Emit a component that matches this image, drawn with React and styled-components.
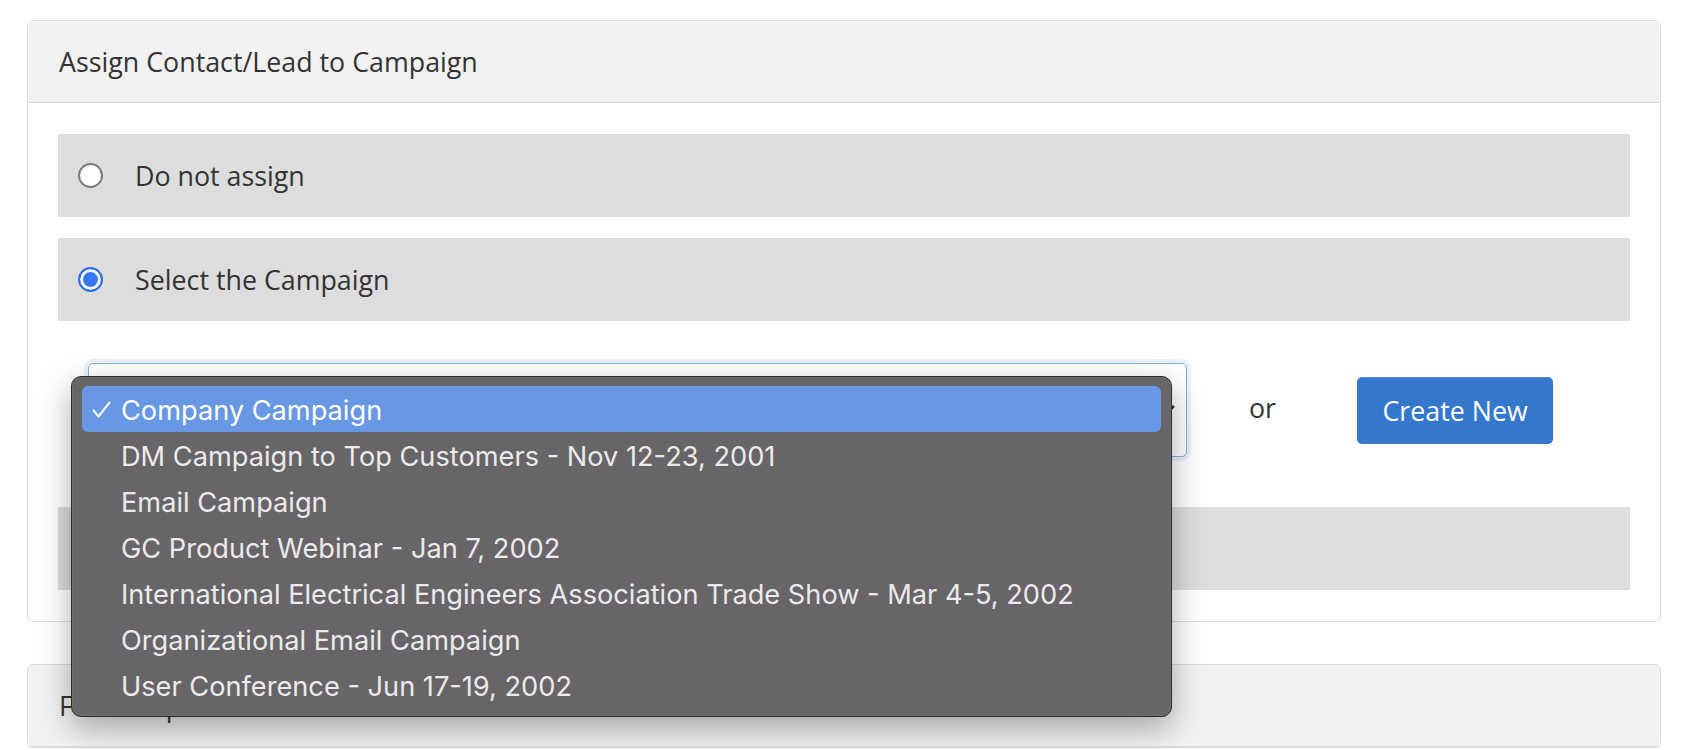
import React from 'react';
import styled, { createGlobalStyle } from 'styled-components';

const GlobalStyle = createGlobalStyle`
  html, body {
    margin: 0;
    padding: 0;
    background: #ffffff;
    font-family: "Open Sans", "Noto Sans", sans-serif;
    color: #333333;
    overflow: hidden;
  }
`;

const Page = styled.main`
  padding: 20px 25px 0 27px;
`;

const Panel = styled.section`
  border: 1px solid #dcdcdc;
  border-radius: 6px;
  margin-bottom: 42px;
  background: #ffffff;
`;

const PanelHeader = styled.header`
  display: flex;
  align-items: center;
  height: 81px;
  padding: 0 31px;
  background: #f2f2f2;
  border-bottom: 1px solid #dcdcdc;
  border-radius: 6px 6px 0 0;
  font-size: 26.8px;
  color: #333333;
`;

const PanelBody = styled.div`
  display: flex;
  flex-direction: column;
  padding: 31px 30px 31px 30px;
`;

const OptionRow = styled.label`
  display: flex;
  align-items: center;
  gap: 32px;
  height: 83px;
  padding-left: 20px;
  margin-bottom: ${(p) => (p.$last ? '0' : '21px')};
  background: #dddddd;
  font-size: 26.8px;
  color: #333333;
`;

const Radio = styled.span`
  box-sizing: border-box;
  flex: none;
  width: 25px;
  height: 25px;
  border-radius: 50%;
  background: ${(p) => (p.$checked ? '#3478f6' : '#ffffff')};
  border: ${(p) => (p.$checked ? '2px solid #2f6fe6' : '2px solid #7a7a7a')};
  box-shadow: ${(p) => (p.$checked ? 'inset 0 0 0 3px #ffffff' : 'none')};
`;

const SelectRow = styled.div`
  display: flex;
  align-items: center;
  padding: 42px 0 50px 30px;
`;

const SelectWrap = styled.div`
  position: relative;
  flex: none;
  width: 1099px;
  height: 94px;
`;

const SelectBox = styled.div`
  box-sizing: border-box;
  height: 100%;
  border: 1px solid #7fb0e8;
  border-radius: 5px;
  background: #ffffff;
  box-shadow: 0 0 0 4px rgba(120, 170, 230, 0.16);
  display: flex;
  align-items: center;
  justify-content: flex-end;
  padding-right: 9px;
`;

const Or = styled.span`
  margin-left: 62px;
  font-size: 26.8px;
  color: #333333;
  padding-bottom: 6px;
`;

const Button = styled.button`
  margin-left: 81px;
  width: 196px;
  height: 67px;
  border: none;
  border-radius: 5px;
  background: #3477cd;
  color: #ffffff;
  font-family: "Open Sans", "Noto Sans", sans-serif;
  font-size: 26.8px;
  box-shadow: inset 0 1px 0 rgba(255, 255, 255, 0.15);
  cursor: pointer;
`;

const Menu = styled.ul`
  position: absolute;
  left: -17px;
  top: 13px;
  box-sizing: border-box;
  width: 1101px;
  height: 341px;
  margin: 0;
  padding: 9px 10px 8px 10px;
  list-style: none;
  background: #676567;
  border: 1px solid #2c2c2c;
  border-radius: 10px;
  box-shadow: 0 12px 32px rgba(0, 0, 0, 0.32), inset 0 0 0 1px rgba(255, 255, 255, 0.08);
  font-family: Inter, "Liberation Sans", sans-serif;
  z-index: 5;
`;

const MenuItem = styled.li`
  position: relative;
  display: flex;
  align-items: center;
  height: 46px;
  padding-left: 39px;
  padding-top: 2px;
  box-sizing: border-box;
  border-radius: 6px;
  background: ${(p) => (p.$selected ? '#6897e3' : 'transparent')};
  color: ${(p) => (p.$selected ? '#ffffff' : '#ebebeb')};
  font-size: 27.2px;
  white-space: nowrap;
`;

const Check = styled.svg`
  position: absolute;
  left: 10px;
  top: 15px;
`;

const campaigns = [
  'Company Campaign',
  'DM Campaign to Top Customers - Nov 12-23, 2001',
  'Email Campaign',
  'GC Product Webinar - Jan 7, 2002',
  'International Electrical Engineers Association Trade Show - Mar 4-5, 2002',
  'Organizational Email Campaign',
  'User Conference - Jun 17-19, 2002',
];

const App = () => {
  return (
    <Page>
      <GlobalStyle />
      <Panel>
        <PanelHeader>Assign Contact/Lead to Campaign</PanelHeader>
        <PanelBody>
          <OptionRow>
            <Radio />
            Do not assign
          </OptionRow>
          <OptionRow $last>
            <Radio $checked />
            Select the Campaign
          </OptionRow>
          <SelectRow>
            <SelectWrap>
              <SelectBox>
                <svg width="20" height="12" viewBox="0 0 20 12">
                  <path d="M3 2 L10 9 L17 2" fill="none" stroke="#333" strokeWidth="2.5" />
                </svg>
              </SelectBox>
              <Menu>
                {campaigns.map((name, i) => (
                  <MenuItem key={name} $selected={i === 0}>
                    {i === 0 && (
                      <Check width="19" height="17" viewBox="0 0 19 17">
                        <path d="M1.5 9.5 L6.5 15.5 L17.5 1.5" fill="none" stroke="#f2f2f2" strokeWidth="2.2" strokeLinecap="round" strokeLinejoin="round" />
                      </Check>
                    )}
                    {name}
                  </MenuItem>
                ))}
              </Menu>
            </SelectWrap>
            <Or>or</Or>
            <Button>Create New</Button>
          </SelectRow>
          <OptionRow $last>
            <Radio />
          </OptionRow>
        </PanelBody>
      </Panel>
      <Panel>
        <PanelHeader>Follow Up</PanelHeader>
      </Panel>
    </Page>
  );
};

export default App;
